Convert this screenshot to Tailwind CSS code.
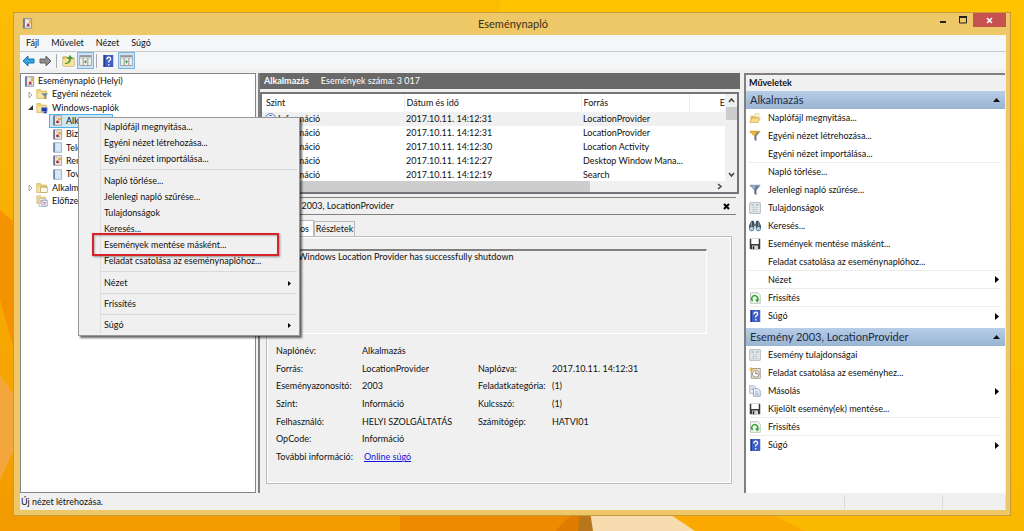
<!DOCTYPE html>
<html lang="hu">
  <head>
    <meta charset="UTF-8" />
    <meta name="viewport" content="width=device-width, initial-scale=1.0" />
    <script src="https://cdn.jsdelivr.net/npm/@tailwindcss/browser@4"></script>
    <title>Eseménynapló</title>
  </head>
  <body class="relative h-screen overflow-hidden bg-[#fdbb00] px-[13px] pt-3 pb-[15px] font-['Lato','Open_Sans',sans-serif] text-[9px] leading-3 text-[#111]">
    <!-- icons -->
    <svg class="hidden">
      <symbol id="log" viewBox="0 0 16 16">
        <path d="M2 1h12v14H2z" fill="#e4e0ec" stroke="#77758f" />
        <path d="M2 1h2v14H2z" fill="#5c6388" />
        <path d="M6 3h7v10H6z" fill="#f5ecdc" />
        <path d="M10 2h3v6h-3z" fill="#e3b64c" />
        <circle cx="9" cy="10" r="2" fill="#c8323c" />
        <path d="M6 12h6" stroke="#667" />
      </symbol>
      <symbol id="logpage" viewBox="0 0 16 16">
        <path d="M3 1h11v14H3z" fill="#f0e4de" stroke="#8a8496" />
        <path d="M2 1h2v14H2z" fill="#545a7c" />
        <circle cx="11" cy="6" r="2" fill="#e0a53a" />
        <circle cx="8" cy="10" r="2" fill="#a3283a" />
        <path d="M6 4h2M10 11h2" stroke="#998" />
      </symbol>
      <symbol id="bluepage" viewBox="0 0 16 16">
        <path d="M3 1h11v14H3z" fill="#cfe3f5" stroke="#8a9cb4" />
        <path d="M2 1h2v14H2z" fill="#5d7392" />
        <path d="M6 4h6M6 7h6M6 10h6" stroke="#e8f3fc" />
      </symbol>
      <symbol id="folder" viewBox="0 0 16 16">
        <path d="M1 2h5l1 2h7v10H1z" fill="#f0d273" stroke="#c9a445" stroke-width=".7" />
        <path d="M2 6h11v7H2z" fill="#f8e6a0" />
      </symbol>
      <symbol id="folderfilter" viewBox="0 0 16 16">
        <use href="#folder" />
        <path d="M7 7h9l-3 4v4l-2-1v-3z" fill="#6e88a8" />
      </symbol>
      <symbol id="folderwin" viewBox="0 0 16 16">
        <use href="#folder" />
        <path d="M7 7h8v6H7z" fill="#1c3cae" stroke="#b9c6dd" />
        <path d="M9 15h6l-2-3z" fill="#2440a0" />
      </symbol>
      <symbol id="folderdoc" viewBox="0 0 16 16">
        <use href="#folder" />
        <path d="M6 6h9v8H6z" fill="#fdfaf0" stroke="#b9a56c" />
        <path d="M6 6h9v2H6z" fill="#d6c48c" />
      </symbol>
      <symbol id="subs" viewBox="0 0 16 16">
        <path d="M1 1h5l1 2h6v8H1z" fill="#f3dc92" stroke="#c9ab5c" stroke-width=".7" />
        <path d="M4 5h8v10H4z" fill="#fff" stroke="#aaa" />
        <path d="M8 7h7v8H8z" fill="#eef2fa" stroke="#8494b8" />
        <path d="M5 8h3M5 11h2M10 10h3M10 12h3" stroke="#c64545" />
      </symbol>
      <symbol id="open" viewBox="0 0 16 16">
        <path d="M2 13V5h4l1 1h5v7z" fill="#e6bf55" />
        <path d="M8 2h5v5H8z" fill="#fbf4d4" stroke="#d3b55e" stroke-width=".6" />
        <path d="M1 14l3-6h11l-3 6z" fill="#f8dd86" stroke="#c99d36" stroke-width=".8" />
      </symbol>
      <symbol id="filtergold" viewBox="0 0 16 16">
        <path d="M1 2h14l-5 6v7l-3-2V8z" fill="#6e8299" />
        <path d="M1 2h10L7 9z" fill="#f3b62c" />
        <path d="M1 2h14" stroke="#d9a437" stroke-width="2" />
      </symbol>
      <symbol id="filter" viewBox="0 0 16 16">
        <path d="M1 2h14l-5 6v7l-3-2V8z" fill="#60788f" />
        <path d="M3 3h6L7 7z" fill="#a9c2d8" />
        <path d="M1 2h14" stroke="#8ba0b4" stroke-width="2" />
      </symbol>
      <symbol id="props" viewBox="0 0 16 16">
        <path d="M1 1h14v14H1z" fill="#f2f5f5" stroke="#8e999c" />
        <path d="M3 4h4M9 4h4" stroke="#7f99a6" stroke-width="1.500" />
        <path d="M3 7h10M3 10h10M3 12.500h10M6 6v7M9.500 6v7" stroke="#b7c4c8" />
      </symbol>
      <symbol id="find" viewBox="0 0 16 16">
        <path d="M2 3l2-2h2l1 2v8H0V8zM14 3l-2-2h-2L9 3v8h7V8z" fill="#3c4c57" />
        <path d="M6 5h4v3H6z" fill="#5e7685" />
        <circle cx="3.500" cy="11.500" r="3" fill="#aed4ea" stroke="#466274" />
        <circle cx="12.500" cy="11.500" r="3" fill="#aed4ea" stroke="#466274" />
        <path d="M3 3v5M13 3v5" stroke="#c9d4da" />
      </symbol>
      <symbol id="save" viewBox="0 0 16 16">
        <path d="M1 1h14v14H1z" fill="#3b3b3b" />
        <path d="M3 1h10v7H3z" fill="#fff" />
        <path d="M4 10h8v5H4z" fill="#d6d6d6" />
        <path d="M5 11h2v4H5z" fill="#222" />
      </symbol>
      <symbol id="refresh" viewBox="0 0 16 16">
        <path d="M2 1h10l3 3v11H2z" fill="#f6fbf4" stroke="#a3b3a0" />
        <path d="M5 12a4 4 0 1 1 6-1" fill="none" stroke="#31a532" stroke-width="2" />
        <path d="M8 10h6l-3 4z" fill="#31a532" />
      </symbol>
      <symbol id="help" viewBox="0 0 16 16">
        <path d="M2 0h13v16H2z" fill="#3f5fc4" />
        <path d="M2 0h2v16H2z" fill="#203a8c" />
        <path d="M6.500 6q0-3 2.500-3t2.500 2.300q0 1.500-1.500 2.200t-1 2.500M9 12v2" fill="none" stroke="#fff" stroke-width="1.700" />
      </symbol>
      <symbol id="task" viewBox="0 0 16 16">
        <path d="M3 2h12v13H3z" fill="#eee8dc" stroke="#857f74" />
        <circle cx="9" cy="9" r="4.500" fill="#fff" stroke="#7d7666" />
        <path d="M9 6v3h3" fill="none" stroke="#444" />
        <path d="M3 0v7M0 3h7M1 1l4 4M5 1L1 5" stroke="#f2a527" />
      </symbol>
      <symbol id="copy" viewBox="0 0 16 16">
        <path d="M1 1h6l2 2v8H1z" fill="#eef3fb" stroke="#8b9bb5" />
        <path d="M6 5h6l3 3v7H6z" fill="#eef3fb" stroke="#7d90ae" />
        <path d="M3 4h3M3 6h3M8 9h4M8 11h5M8 13h5" stroke="#8ba3c7" />
      </symbol>
      <symbol id="pane" viewBox="0 0 16 14">
        <path d="M.5.5h15v13H.5z" fill="#f4f4f0" stroke="#81868c" />
        <path d="M1 1h14v2H1z" fill="#8e959d" />
        <path d="M1 4h14" stroke="#b9bdc2" />
      </symbol>
    </svg>

    <!-- wallpaper -->
    <svg class="absolute inset-0 h-full w-full" viewBox="0 0 1024 531" preserveAspectRatio="none" aria-hidden="true">
      <defs>
        <linearGradient id="wall" x1="0" y1="0" x2="0" y2="1">
          <stop offset="0" stop-color="#fdbd00" />
          <stop offset="1" stop-color="#f29a00" />
        </linearGradient>
        <linearGradient id="wallright" x1="0" y1="0" x2="0" y2="1">
          <stop offset="0" stop-color="#ffc400" />
          <stop offset="1" stop-color="#fbb800" />
        </linearGradient>
      </defs>
      <path d="M0 0h1024v531H0z" fill="url(#wall)" />
      <path d="M500 0h524v531H500z" fill="url(#wallright)" />
      <path d="M0 210l14 12v128L0 300z" fill="#f59200" />
      <path d="M0 375l14 20v55L0 480z" fill="#f2a63c" />
      <path d="M400 500h180l-20 31H400z" fill="#ee8a00" />
      <path d="M555 531l20-20h14v20z" fill="#e07c00" />
      <path d="M580 511h11l3 20h-16z" fill="#b9771d" />
      <path d="M590 511h75l35 20H593z" fill="#f6dcae" />
      <path d="M665 511h100l40 20H695z" fill="#fba800" />
    </svg>

    <div class="relative flex h-full flex-col border border-[#c89a3c] bg-[#eec767] pr-1 pb-[5px] pl-[6px]">
      <!-- title bar -->
      <header class="relative flex h-[22px] shrink-0 items-center justify-center">
        <svg class="absolute top-[5px] left-[2px] h-[11px] w-[11px]"><use href="#log" /></svg>
        <h1 class="text-[11px] text-[#3b3018]">Eseménynapló</h1>
        <div class="absolute top-0 right-0 flex h-[14px]">
          <button aria-label="Kis méret" class="flex w-5 items-center justify-center"><svg class="h-2 w-2"><path d="M1 6h6" stroke="#222" stroke-width="2" /></svg></button>
          <button aria-label="Teljes méret" class="flex w-5 items-center justify-center"><svg class="h-2 w-2"><path d="M.5 1v6h7V1z" fill="none" stroke="#222" /><path d="M0 1h8" stroke="#222" stroke-width="2" /></svg></button>
          <button aria-label="Bezárás" class="flex w-[33px] items-center justify-center bg-[#c75050]"><svg class="h-[7px] w-[7px]"><path d="M1 1l5 5M6 1L1 6" stroke="#fff" stroke-width="1.500" /></svg></button>
        </div>
      </header>

      <nav class="flex h-[17px] shrink-0 items-center gap-3 border-b border-[#c6c8ca] bg-[#f5f6f7] pl-[6px]">
        <button>Fájl</button>
        <button>Művelet</button>
        <button>Nézet</button>
        <button>Súgó</button>
      </nav>

      <!-- toolbar -->
      <div class="flex h-[17px] shrink-0 items-center bg-[#f5f6f7] pl-[2px]">
        <button aria-label="Vissza"><svg class="h-3 w-[13px]"><path d="M1 6l5-5v3h6v4H6v3z" fill="#35a4e6" stroke="#1b6fae" /></svg></button>
        <button aria-label="Előre" class="ml-1"><svg class="h-3 w-[13px]"><path d="M12 6L7 1v3H1v4h6v3z" fill="#8c8c8c" stroke="#646464" /></svg></button>
        <span class="ml-1 h-[14px] w-px bg-[#a9a9a9]"></span>
        <button aria-label="Megnyitás" class="ml-[5px]"><svg class="h-[13px] w-[13px]" viewBox="0 0 13 13"><path d="M1 3h4l1 1h6v8H1z" fill="#edcf75" stroke="#bd9b45" /><path d="M1 5h11v7H1z" fill="#f6e09a" /><path d="M3 9q4 0 4-4H5l3-4 3 4H9q0 5-6 5z" fill="#3ca13c" /></svg></button>
        <button aria-label="Konzolfa" class="ml-[2px] flex h-[17px] w-[17px] items-center justify-center border border-[#7eb4e0] bg-[#cbe3f7]"><svg class="h-[11px] w-[13px]" viewBox="0 0 16 14"><use href="#pane" /><path d="M5 4v9M11 4v9" stroke="#777" /><path d="M9 6v5L6 8.500z" fill="#2f9a35" /></svg></button>
        <span class="ml-[2px] h-[14px] w-px bg-[#a9a9a9]"></span>
        <button aria-label="Súgó" class="ml-[5px]"><svg class="h-3 w-3"><use href="#help" /></svg></button>
        <button aria-label="Műveleti ablak" class="ml-1 flex h-[17px] w-[17px] items-center justify-center border border-[#7eb4e0] bg-[#cbe3f7]"><svg class="h-[11px] w-[13px]" viewBox="0 0 16 14"><use href="#pane" /><path d="M5 4v9M11 4v9" stroke="#777" /><path d="M7 6v5l3-2.500z" fill="#2f9a35" /></svg></button>
      </div>

      <main class="flex min-h-0 flex-1 bg-[#f0f0f0] pt-1">
        <!-- console tree -->
        <section class="w-[236px] shrink-0 border border-[#82878f] bg-white">
          <ul class="flex h-[133px] flex-col justify-between pt-px">
            <li class="flex items-center gap-[3px] pl-[3px]"><svg class="h-[11px] w-[11px]"><use href="#log" /></svg>Eseménynapló (Helyi)</li>
            <li class="flex items-center pl-[7px]"><svg class="mr-[3px] h-[7px] w-[5px]"><path d="M1 1l3 3-3 3z" fill="#fff" stroke="#a6a6a6" /></svg><svg class="mr-1 h-3 w-3"><use href="#folderfilter" /></svg>Egyéni nézetek</li>
            <li class="flex items-center pl-[7px]"><svg class="mr-[3px] h-[5px] w-[5px]"><path d="M5 0v5H0z" fill="#333" /></svg><svg class="mr-1 h-3 w-3"><use href="#folderwin" /></svg>Windows-naplók</li>
            <li class="ml-[29px] flex w-[62px] items-center bg-[#cbe8f6] pl-[2px] outline outline-[#4fb0e8]"><svg class="mr-[3px] h-[11px] w-[11px]"><use href="#logpage" /></svg>Alkalmazás</li>
            <li class="flex items-center pl-[31px]"><svg class="mr-[3px] h-[11px] w-[11px]"><use href="#logpage" /></svg>Biztonság</li>
            <li class="flex items-center pl-[31px]"><svg class="mr-[3px] h-[11px] w-[11px]"><use href="#bluepage" /></svg>Telepítés</li>
            <li class="flex items-center pl-[31px]"><svg class="mr-[3px] h-[11px] w-[11px]"><use href="#logpage" /></svg>Rendszer</li>
            <li class="flex items-center pl-[31px]"><svg class="mr-[3px] h-[11px] w-[11px]"><use href="#bluepage" /></svg>Továbbított</li>
            <li class="flex items-center pl-[7px]"><svg class="mr-[3px] h-[7px] w-[5px]"><path d="M1 1l3 3-3 3z" fill="#fff" stroke="#a6a6a6" /></svg><svg class="mr-1 h-3 w-3"><use href="#folderdoc" /></svg>Alkalmazás-</li>
            <li class="flex items-center pl-[15px]"><svg class="mr-1 h-3 w-3"><use href="#subs" /></svg>Előfizetések</li>
          </ul>
        </section>

        <!-- event list and preview -->
        <section class="ml-[2px] flex min-w-0 flex-1 flex-col border-l-2 border-[#808080]">
          <h2 class="flex h-4 shrink-0 items-center gap-3 bg-[#696969] pl-1 text-white"><b>Alkalmazás</b><span>Események száma: 3 017</span></h2>
          <div class="mt-[3px] mr-px flex h-[102px] shrink-0 flex-col border-2 border-[#74747a] bg-white">
            <div class="flex min-h-0 flex-1">
              <table class="w-full table-fixed text-left whitespace-nowrap">
                <thead>
                  <tr class="h-[18px]">
                    <th class="w-[142px] border-r border-[#ececec] pl-1 font-normal">Szint</th>
                    <th class="w-[177px] border-r border-[#ececec] pl-[2px] font-normal">Dátum és idő</th>
                    <th class="border-r border-[#ececec] pl-[2px] font-normal">Forrás</th>
                    <th class="w-[36px] text-right font-normal">E</th>
                  </tr>
                </thead>
                <tbody>
                  <tr class="h-[14px] bg-[#f0f0f0]"><td class="relative pl-4"><svg class="absolute top-px left-[3px] h-[11px] w-[11px]"><circle cx="5.500" cy="5.500" r="5" fill="#e9f1fc" stroke="#5d88c8" /><path d="M5.500 2v1M5.500 4v5" stroke="#2c52a8" stroke-width="2" /></svg>Információ</td><td class="pl-[2px]">2017.10.11. 14:12:31</td><td class="pl-[2px]">LocationProvider</td><td></td></tr>
                  <tr class="h-[14px]"><td class="pl-4">Információ</td><td class="pl-[2px]">2017.10.11. 14:12:31</td><td class="pl-[2px]">LocationProvider</td><td></td></tr>
                  <tr class="h-[14px]"><td class="pl-4">Információ</td><td class="pl-[2px]">2017.10.11. 14:12:30</td><td class="pl-[2px]">Location Activity</td><td></td></tr>
                  <tr class="h-[14px]"><td class="pl-4">Információ</td><td class="pl-[2px]">2017.10.11. 14:12:27</td><td class="pl-[2px]">Desktop Window Mana...</td><td></td></tr>
                  <tr class="h-[14px]"><td class="pl-4">Információ</td><td class="pl-[2px]">2017.10.11. 14:12:19</td><td class="pl-[2px]">Search</td><td></td></tr>
                </tbody>
              </table>
              <div class="flex w-3 shrink-0 flex-col items-center bg-[#f0f0f0]">
                <svg class="h-[13px] w-[7px]"><path d="M1 8l2.500-3L6 8" fill="none" stroke="#444" stroke-width="1.500" /></svg>
                <div class="h-[13px] w-[11px] bg-[#cdcdcd]"></div>
                <svg class="mt-auto h-[13px] w-[7px]"><path d="M1 5l2.500 3L6 5" fill="none" stroke="#444" stroke-width="1.500" /></svg>
              </div>
            </div>
            <div class="flex h-[11px] shrink-0 items-center bg-[#f0f0f0]">
              <div class="h-full w-[69%] bg-[#cdcdcd]"></div>
              <svg class="mr-[14px] ml-auto h-[7px] w-[6px]"><path d="M1 1l3 2.500L1 6" fill="none" stroke="#444" stroke-width="1.500" /></svg>
            </div>
          </div>

          <div class="mt-[3px] mr-1 flex h-[18px] shrink-0 items-center justify-between border-y border-[#808080] pr-[6px] pl-1">
            <h3>Esemény 2003, LocationProvider</h3>
            <button aria-label="Előnézet bezárása"><svg class="h-[7px] w-[7px]"><path d="M1 1l5 5M6 1L1 6" stroke="#000" stroke-width="2" /></svg></button>
          </div>

          <div class="mt-[5px] ml-[6px] flex h-4 shrink-0 items-end">
            <button class="h-4 w-12 border border-b-0 border-[#bcbcbc] bg-white pr-1 text-right">Általános</button>
            <button class="h-[15px] w-[41px] border border-b-0 border-[#bcbcbc] bg-[#f0f0f0] text-center">Részletek</button>
          </div>
          <div class="mr-2 mb-[9px] ml-[6px] min-h-0 flex-1 border border-[#bcbcbc] pt-3 pl-[9px] shadow-[inset_1px_1px_0_#fff,inset_-1px_-1px_0_#fff]">
            <p class="mr-6 h-[85px] border border-t-2 border-t-[#808080] border-r-white border-b-white border-l-[#808080] pl-1">The Windows Location Provider has successfully shutdown</p>
            <dl class="mt-2 grid h-[124px] grid-cols-[86px_116px_74px_1fr] grid-rows-7 items-center whitespace-nowrap">
              <dt>Naplónév:</dt><dd class="col-span-3">Alkalmazás</dd>
              <dt>Forrás:</dt><dd>LocationProvider</dd><dt>Naplózva:</dt><dd>2017.10.11. 14:12:31</dd>
              <dt>Eseményazonosító:</dt><dd>2003</dd><dt>Feladatkategória:</dt><dd>(1)</dd>
              <dt>Szint:</dt><dd>Információ</dd><dt>Kulcsszó:</dt><dd>(1)</dd>
              <dt>Felhasználó:</dt><dd>HELYI SZOLGÁLTATÁS</dd><dt>Számítógép:</dt><dd>HATVI01</dd>
              <dt>OpCode:</dt><dd class="col-span-3">Információ</dd>
              <dt>További információ:</dt><dd class="col-span-3 pl-[2px]"><a href="#" class="text-[#1414e0] underline">Online súgó</a></dd>
            </dl>
          </div>
        </section>

        <!-- actions pane -->
        <aside class="mr-px ml-1 flex w-[261px] shrink-0 flex-col border-t-2 border-l-2 border-[#808080] bg-white">
          <h2 class="flex h-4 shrink-0 items-center bg-[#f0f0f0] pl-[3px] font-bold">Műveletek</h2>
          <h3 class="flex h-[18px] shrink-0 items-center justify-between bg-linear-to-b from-[#b7cde8] to-[#99b4d1] pr-[5px] pl-1 text-[11px] text-[#1e2b45]">Alkalmazás<svg class="h-1 w-[7px]"><path d="M0 4l3.500-4L7 4z" fill="#111" /></svg></h3>
          <div class="flex shrink-0 flex-col pr-1 pl-[3px]">
            <button class="flex h-[18px] items-center gap-[7px]"><svg class="h-3 w-3"><use href="#open" /></svg>Naplófájl megnyitása...</button>
            <button class="flex h-[18px] items-center gap-[7px]"><svg class="h-3 w-3"><use href="#filtergold" /></svg>Egyéni nézet létrehozása...</button>
            <button class="flex h-[18px] items-center border-b border-[#ececec] pl-[19px]">Egyéni nézet importálása...</button>
            <button class="flex h-[18px] items-center pl-[19px]">Napló törlése...</button>
            <button class="flex h-[18px] items-center gap-[7px]"><svg class="h-3 w-3"><use href="#filter" /></svg>Jelenlegi napló szűrése...</button>
            <button class="flex h-[18px] items-center gap-[7px]"><svg class="h-3 w-3"><use href="#props" /></svg>Tulajdonságok</button>
            <button class="flex h-[18px] items-center gap-[7px]"><svg class="h-3 w-3"><use href="#find" /></svg>Keresés...</button>
            <button class="flex h-[18px] items-center gap-[7px]"><svg class="h-3 w-3"><use href="#save" /></svg>Események mentése másként...</button>
            <button class="flex h-[18px] items-center border-b border-[#ececec] pl-[19px]">Feladat csatolása az eseménynaplóhoz...</button>
            <button class="flex h-[18px] items-center justify-between border-b border-[#ececec] pr-[2px] pl-[19px]">Nézet<svg class="h-[7px] w-1"><path d="M0 0l4 3.500L0 7z" /></svg></button>
            <button class="flex h-[18px] items-center gap-[7px] border-b border-[#ececec]"><svg class="h-3 w-3"><use href="#refresh" /></svg>Frissítés</button>
            <button class="flex h-[18px] items-center gap-[7px] pr-[2px]"><svg class="h-3 w-3"><use href="#help" /></svg>Súgó<svg class="ml-auto h-[7px] w-1"><path d="M0 0l4 3.500L0 7z" /></svg></button>
          </div>
          <h3 class="mt-[3px] flex h-[18px] shrink-0 items-center justify-between bg-linear-to-b from-[#b7cde8] to-[#99b4d1] pr-[5px] pl-1 text-[11px] text-[#1e2b45]">Esemény 2003, LocationProvider<svg class="h-1 w-[7px]"><path d="M0 4l3.500-4L7 4z" fill="#111" /></svg></h3>
          <div class="flex shrink-0 flex-col pr-1 pl-[3px]">
            <button class="flex h-[18px] items-center gap-[7px]"><svg class="h-3 w-3"><use href="#props" /></svg>Esemény tulajdonságai</button>
            <button class="flex h-[18px] items-center gap-[7px]"><svg class="h-3 w-3"><use href="#task" /></svg>Feladat csatolása az eseményhez...</button>
            <button class="flex h-[18px] items-center gap-[7px] pr-[2px]"><svg class="h-3 w-3"><use href="#copy" /></svg>Másolás<svg class="ml-auto h-[7px] w-1"><path d="M0 0l4 3.500L0 7z" /></svg></button>
            <button class="flex h-[18px] items-center gap-[7px] border-b border-[#ececec]"><svg class="h-3 w-3"><use href="#save" /></svg>Kijelölt esemény(ek) mentése...</button>
            <button class="flex h-[18px] items-center gap-[7px] border-b border-[#ececec]"><svg class="h-3 w-3"><use href="#refresh" /></svg>Frissítés</button>
            <button class="flex h-[18px] items-center gap-[7px] pr-[2px]"><svg class="h-3 w-3"><use href="#help" /></svg>Súgó<svg class="ml-auto h-[7px] w-1"><path d="M0 0l4 3.500L0 7z" /></svg></button>
          </div>
        </aside>
      </main>

      <footer class="flex h-[17px] shrink-0 items-center bg-[#f0f0f0] pl-px">
        <span class="flex-1">Új nézet létrehozása.</span>
        <span class="h-[14px] w-[98px] border-l border-[#d9d9d9]"></span>
        <span class="h-[14px] w-16 border-x border-[#d9d9d9]"></span>
      </footer>

      <!-- context menu of the selected log -->
      <div class="absolute top-[104px] left-[64px] w-[222px] border border-[#979797] bg-[#f0f0f0] pt-px pb-[2px] shadow-[2px_2px_2px_#00000099]">
        <div class="ml-[21px] flex flex-col border-l border-[#e0e0e0] pr-[2px]">
          <button class="h-4 pl-[3px] text-left">Naplófájl megnyitása...</button>
          <button class="h-4 pl-[3px] text-left">Egyéni nézet létrehozása...</button>
          <button class="h-4 pl-[3px] text-left">Egyéni nézet importálása...</button>
          <hr class="mt-[2px] mb-[3px] border-[#d9d9d9]" />
          <button class="h-4 pl-[3px] text-left">Napló törlése...</button>
          <button class="h-4 pl-[3px] text-left">Jelenlegi napló szűrése...</button>
          <button class="h-4 pl-[3px] text-left">Tulajdonságok</button>
          <button class="h-4 pl-[3px] text-left">Keresés...</button>
          <button class="relative h-4 pl-[3px] text-left">Események mentése másként...<span class="absolute -top-1 -left-[9px] h-[23px] w-[187px] border-2 border-[#d8232a] shadow-[1px_1px_2px_#00000066,inset_1px_1px_2px_#00000044]"></span></button>
          <button class="h-4 pl-[3px] text-left">Feladat csatolása az eseménynaplóhoz...</button>
          <hr class="mt-[2px] mb-[3px] border-[#d9d9d9]" />
          <button class="flex h-4 items-center justify-between pr-[6px] pl-[3px]">Nézet<svg class="h-[5px] w-[3px]"><path d="M0 0l3 2.500L0 5z" /></svg></button>
          <hr class="my-[2px] border-[#d9d9d9]" />
          <button class="h-4 pl-[3px] text-left">Frissítés</button>
          <hr class="my-[2px] border-[#d9d9d9]" />
          <button class="flex h-4 items-center justify-between pr-[6px] pl-[3px]">Súgó<svg class="h-[5px] w-[3px]"><path d="M0 0l3 2.500L0 5z" /></svg></button>
        </div>
      </div>
    </div>
  </body>
</html>
